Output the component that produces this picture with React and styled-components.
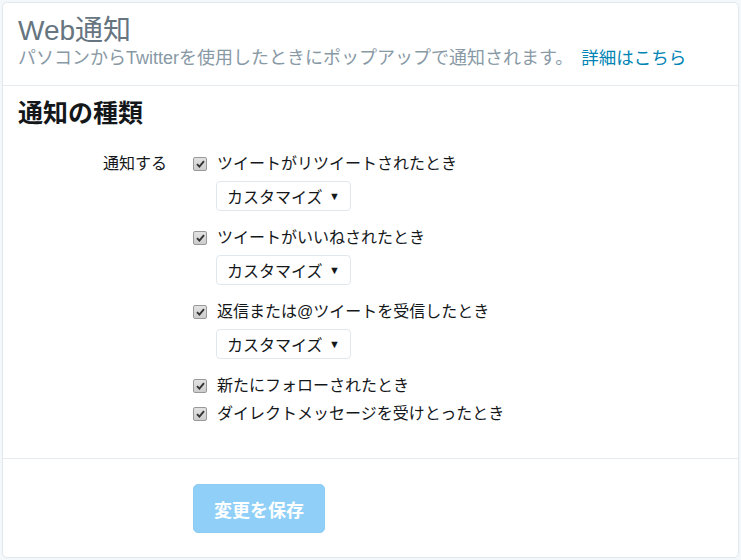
import React from "react";
import styled, { createGlobalStyle } from "styled-components";

const GlobalStyle = createGlobalStyle`
  html, body {
    margin: 0;
    padding: 0;
    background: #f5f8fa;
  }
  body {
    padding: 2px;
    font-family: "Liberation Sans", "Noto Sans CJK JP", sans-serif;
    color: #14171a;
  }
`;

const Card = styled.div`
  background: #fff;
  border: 1px solid #e1e8ed;
  border-radius: 5px;
  width: 735px;
  min-height: 554px;
  display: flex;
  flex-direction: column;
`;

const Header = styled.div`
  padding: 11px 15px 16px;
  border-bottom: 1px solid #e6ecf0;
`;

const Title = styled.h1`
  margin: 0;
  font-size: 28px;
  line-height: 33px;
  font-weight: 400;
  color: #66757f;
`;

const Subtitle = styled.p`
  margin: 0;
  font-size: 18px;
  line-height: 22px;
  color: #8899a6;

  a {
    font-size: 17.5px;
    color: #0084b4;
    text-decoration: none;
    margin-left: 8px;
  }
`;

const Section = styled.div`
  padding: 12px 15px 33px;
  border-bottom: 1px solid #e6ecf0;
`;

const Heading = styled.h2`
  margin: 0 0 25px;
  font-size: 25px;
  line-height: 30px;
  font-weight: 700;
  color: #14171a;
`;

const FormRow = styled.div`
  display: grid;
  grid-template-columns: 149px 1fr;
  column-gap: 26px;
`;

const Label = styled.div`
  text-align: right;
  font-size: 16px;
  line-height: 22px;
  color: #14171a;
`;

const Options = styled.div`
  display: flex;
  flex-direction: column;
  gap: 6px;
`;

const Item = styled.div`
  display: flex;
  flex-direction: column;
  align-items: flex-start;
`;

const Check = styled.label`
  display: flex;
  align-items: center;
  gap: 10px;
  font-size: 16px;
  line-height: 22px;
  color: #14171a;
`;

const Box = styled.span`
  width: 12px;
  height: 12px;
  border: 1px solid #999;
  border-radius: 2px;
  background: linear-gradient(#e2e2e2, #cdcdcd);
  display: flex;
  align-items: center;
  justify-content: center;
`;

const Select = styled.div`
  margin: 6px 0 10px 23px;
  height: 28px;
  width: 113px;
  padding: 0 10px;
  border: 1px solid #e1e8ed;
  border-radius: 4px;
  display: flex;
  align-items: center;
  justify-content: space-between;
  font-size: 16px;
  color: #14171a;

  span {
    font-size: 11px;
    color: #14171a;
  }
`;

const Footer = styled.div`
  padding: 25px 15px 24px 190px;
`;

const SaveButton = styled.button`
  width: 132px;
  height: 49px;
  border: 1px solid #8ccbf4;
  border-radius: 5px;
  background: #8fcff8;
  color: #fff;
  font-family: "Liberation Sans", "Noto Sans CJK JP", sans-serif;
  font-size: 18px;
  font-weight: 700;
  cursor: default;
`;

const CheckIcon = () => (
  <svg width="9" height="8" viewBox="0 0 9 8">
    <path d="M1 4.2 L3.4 6.6 L8 1.2" fill="none" stroke="#333" strokeWidth="1.9" />
  </svg>
);

const options = [
  { text: "ツイートがリツイートされたとき", custom: true },
  { text: "ツイートがいいねされたとき", custom: true },
  { text: "返信または@ツイートを受信したとき", custom: true },
  { text: "新たにフォローされたとき" },
  { text: "ダイレクトメッセージを受けとったとき" },
];

export default function App() {
  return (
    <>
      <GlobalStyle />
      <Card>
        <Header>
          <Title>Web通知</Title>
          <Subtitle>
            パソコンからTwitterを使用したときにポップアップで通知されます。
            <a href="#">詳細はこちら</a>
          </Subtitle>
        </Header>
        <Section>
          <Heading>通知の種類</Heading>
          <FormRow>
            <Label>通知する</Label>
            <Options>
              {options.map((o) => (
                <Item key={o.text}>
                  <Check>
                    <Box>
                      <CheckIcon />
                    </Box>
                    {o.text}
                  </Check>
                  {o.custom && (
                    <Select>
                      カスタマイズ <span>▼</span>
                    </Select>
                  )}
                </Item>
              ))}
            </Options>
          </FormRow>
        </Section>
        <Footer>
          <SaveButton>変更を保存</SaveButton>
        </Footer>
      </Card>
    </>
  );
}
